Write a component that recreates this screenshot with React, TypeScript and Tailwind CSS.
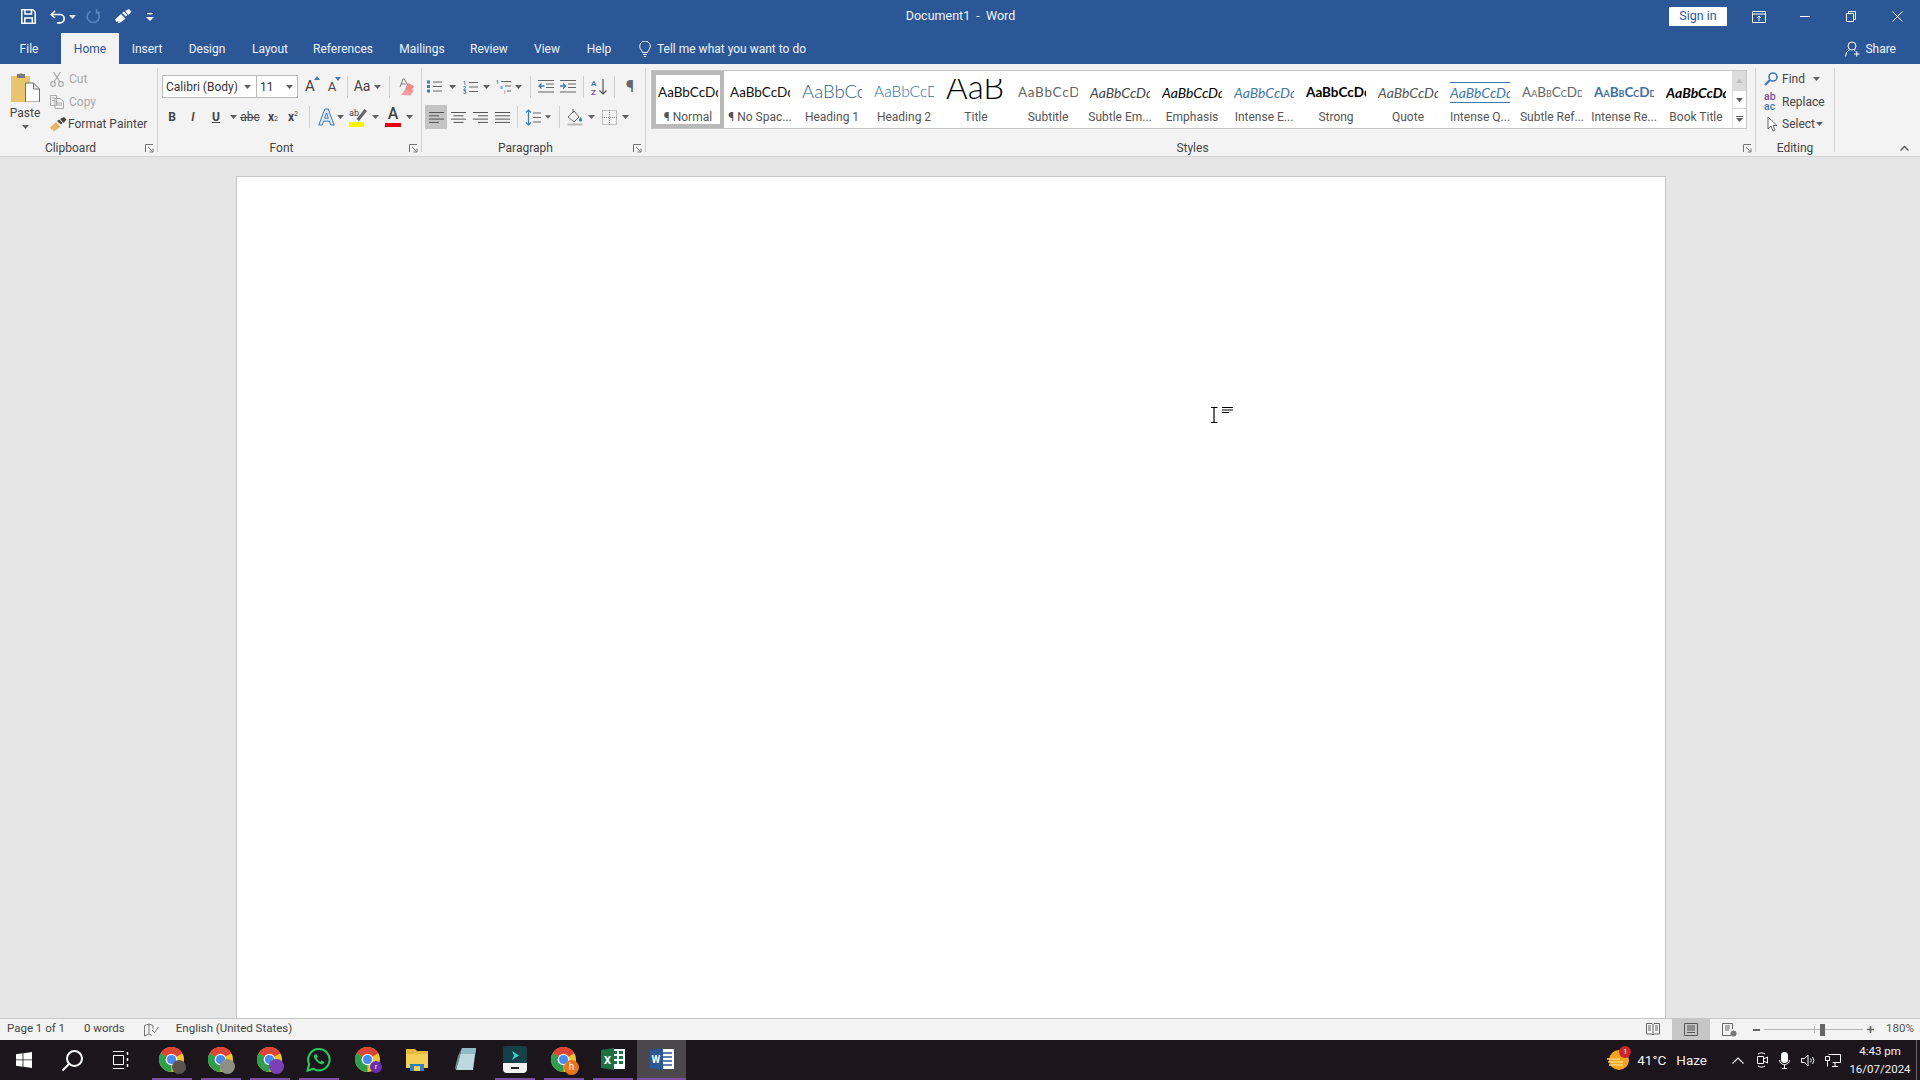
import type { ReactNode } from "react";

const TAB_LABELS = [
  ["Insert", "w-[56px]"],
  ["Design", "w-[64px]"],
  ["Layout", "w-[62px]"],
  ["References", "w-[84px]"],
  ["Mailings", "w-[74px]"],
  ["Review", "w-[60px]"],
  ["View", "w-[56px]"],
  ["Help", "w-[48px]"],
];

function Cell({ className, children }: { className: string; children?: ReactNode }) {
  return <div className={`flex shrink-0 items-center justify-center ${className}`}>{children}</div>;
}

function Caret({ color = "#5f5f5f" }: { color?: string }) {
  return (
    <svg width="7" height="4" viewBox="0 0 7 4">
      <path d="M0 0h7L3.5 4z" fill={color} />
    </svg>
  );
}

function Sep({ className = "h-[22px]" }: { className?: string }) {
  return <div className={`w-px bg-[#cfcfcf] ${className}`} />;
}

function Launcher() {
  return (
    <svg width="9" height="9" viewBox="0 0 9 9" fill="none" stroke="#777">
      <path d="M.5 8V.5H8" />
      <path d="M3 3l4.5 4.5M8 4.5V8H4.5" />
    </svg>
  );
}

function Brush({ handle, tip }: { handle: string; tip: string }) {
  return (
    <svg width="17" height="15" viewBox="0 0 17 15">
      <path d="M0 10.5 6 5l4.5 4.5C8 12 5 14 2.5 14.5L3.5 12 1.5 13z" fill={handle} />
      <path d="M7 4 11 7.5 12.5 6 9 2.5zM10 2l4-2 2.5 2.5-3 3.5z" fill={tip} />
    </svg>
  );
}

function Lines({ kind }: { kind: "left" | "center" | "right" | "justify" }) {
  const rows = [
    [0, 15],
    kind === "left" ? [0, 10] : kind === "center" ? [2.5, 12.5] : kind === "right" ? [5, 15] : [0, 15],
    [0, 15],
    kind === "left" ? [0, 10] : kind === "center" ? [2.5, 12.5] : kind === "right" ? [5, 15] : [0, 15],
  ];
  return (
    <svg width="15" height="13" viewBox="0 0 15 13" stroke="#555">
      {rows.map((r, i) => (
        <path key={i} d={`M${r[0]} ${1.5 + i * 3.3}H${r[1]}`} />
      ))}
    </svg>
  );
}

function Chrome({ badge }: { badge?: ReactNode }) {
  return (
    <div className="relative h-[25px] w-[25px]">
      <svg width="25" height="25" viewBox="0 0 24 24">
        <circle cx="12" cy="12" r="12" fill="#f0c42e" />
        <path d="M12 12 1.6 6A12 12 0 0 1 22.4 6z" fill="#db4437" />
        <path d="M12 12 1.6 6A12 12 0 0 0 12 24z" fill="#2f9e4f" />
        <circle cx="12" cy="12" r="5.6" fill="#fff" />
        <circle cx="12" cy="12" r="4.4" fill="#4a8bf0" />
      </svg>
      {badge}
    </div>
  );
}

function RibbonGroup({
  className,
  label,
  launcher = true,
  children,
}: {
  className: string;
  label: string;
  launcher?: boolean;
  children: ReactNode;
}) {
  return (
    <section className={`flex h-[84px] shrink-0 flex-col border-r border-[#cfcfcf] ${className}`}>
      <div className="h-[72px] shrink-0">{children}</div>
      <div className={`relative flex h-4 shrink-0 items-center justify-center text-[12px] leading-4 text-[#444] ${launcher ? "pr-[16px]" : ""}`}>
        {label}
        {launcher && (
          <span className="absolute right-[3px] top-[4px] flex">
            <Launcher />
          </span>
        )}
      </div>
    </section>
  );
}

const STYLES: { label: string; cls: string; text?: string }[] = [
  { label: "¶ Normal", cls: "text-[13.5px] text-[#111]" },
  { label: "¶ No Spac...", cls: "text-[13.5px] text-[#111]" },
  { label: "Heading 1", cls: "text-[18.5px] font-light text-[#2f5d8a]" },
  { label: "Heading 2", cls: "text-[15.5px] font-light text-[#2f6f9f]" },
  { label: "Title", cls: "text-[33px] font-light leading-none text-black mt-[-12px]", text: "AaB" },
  { label: "Subtitle", cls: "text-[13.5px] tracking-[0.7px] text-[#666]" },
  { label: "Subtle Em...", cls: "text-[14px] italic text-[#444]" },
  { label: "Emphasis", cls: "text-[14px] italic text-black" },
  { label: "Intense E...", cls: "text-[14px] italic text-[#3f78ad]" },
  { label: "Strong", cls: "text-[13.5px] font-bold text-black" },
  { label: "Quote", cls: "text-[14px] italic text-[#555]" },
  { label: "Intense Q...", cls: "text-[14px] italic text-[#3f78ad]" },
  { label: "Subtle Ref...", cls: "text-[13.5px] text-[#666] [font-variant-caps:small-caps]" },
  { label: "Intense Re...", cls: "text-[13.5px] font-bold text-[#3f6fa8] [font-variant-caps:small-caps]" },
  { label: "Book Title", cls: "text-[14px] font-bold italic text-black" },
];

function StyleItem({ label, cls, text, selected, rule }: { label: string; cls: string; text?: string; selected?: boolean; rule?: boolean }) {
  return (
    <div className={`flex h-[57px] w-[72px] shrink-0 flex-col items-center ${selected ? "border-[4px] border-[#b9b9b9] pt-[4px]" : "pt-[8px]"}`}>
      <div className="flex h-[26px] w-[60px] shrink-0 items-center font-['Lato',sans-serif]">
        <div className={`flex w-full items-center overflow-hidden whitespace-nowrap ${rule ? "h-[21px] border-y border-[#3f78ad]" : "h-full"}`}>
          <span className={cls}>{text ?? "AaBbCcDd"}</span>
        </div>
      </div>
      <div className="mt-[4px] whitespace-nowrap text-[12px] leading-[16px] text-[#555]">{label}</div>
    </div>
  );
}

function TaskItem({ children, bar = false, active = false }: { children: ReactNode; bar?: boolean; active?: boolean }) {
  return (
    <div className={`flex h-10 w-[49px] shrink-0 flex-col items-center ${active ? "bg-[#4b474b]" : ""}`}>
      <div className="flex flex-1 items-center justify-center">{children}</div>
      <div className={`h-[2px] ${active ? "w-full" : "w-[40px]"} ${bar ? "bg-[#7d4f9e]" : ""}`} />
    </div>
  );
}

function Badge({ className, children }: { className: string; children?: ReactNode }) {
  return (
    <span className={`absolute flex items-center justify-center rounded-full text-[8px] leading-none text-white ${className}`}>
      {children}
    </span>
  );
}

export default function App() {
  return (
    <div className="relative flex h-screen w-screen flex-col overflow-hidden bg-[#e6e6e6] font-['Roboto','Segoe_UI',sans-serif]">
      {/* Title bar */}
      <header className="flex h-[33px] shrink-0 items-center bg-[#2b5797] text-white">
        <div className="flex flex-1 items-center">
          <svg className="ml-[21px]" width="15" height="15" viewBox="0 0 15 15" fill="none" stroke="#fff" strokeWidth="1.5">
            <path d="M.8.8h11L14.2 3v11.2H.8z" />
            <path d="M4 1v4h6.5V1M3.8 14V9h7.5v5" />
          </svg>
          <svg className="ml-[14px]" width="16" height="14" viewBox="0 0 16 14" fill="none" stroke="#fff" strokeWidth="1.6">
            <path d="M1.5 4.5H10a4.2 4.2 0 0 1 0 8.4H7" />
            <path d="M5 1 1.3 4.5 5 8" />
          </svg>
          <span className="ml-[3px] flex"><Caret color="#dfe7f3" /></span>
          <svg className="ml-[10px]" width="16" height="15" viewBox="0 0 16 15" fill="none" stroke="#5a86c0" strokeWidth="1.6">
            <path d="M10 2.2a6 6 0 1 1-5.5 0" />
            <path d="M10.5 0v3.6H14" />
          </svg>
          <span className="ml-[13px] flex"><Brush handle="#fff" tip="#fff" /></span>
          <svg className="ml-[14px]" width="8" height="8" viewBox="0 0 8 8" fill="#fff">
            <path d="M1 0h6v1.2H1zM0 4h8L4 8z" />
          </svg>
        </div>
        <div className="pb-[1px] pl-[1px] text-[12.5px] text-[#f2f5fa]">Document1&nbsp; -&nbsp; Word</div>
        <div className="flex flex-1 items-center justify-end">
          <div className="mr-[9px] flex h-[19px] w-[58px] items-center justify-center bg-white text-[12.5px] text-[#2b5797]">Sign in</div>
          <Cell className="h-[33px] w-[46px]">
            <svg width="14" height="12" viewBox="0 0 14 12" fill="none" stroke="#fff">
              <path d="M.5.5h13v11H.5zM.5 3h13M7 10V5M5 7l2-2 2 2" />
            </svg>
          </Cell>
          <Cell className="h-[33px] w-[46px]">
            <div className="h-px w-[10px] bg-white" />
          </Cell>
          <Cell className="h-[33px] w-[46px]">
            <svg width="10" height="11" viewBox="0 0 10 11" fill="none" stroke="#fff">
              <path d="M.5 2.5h7v8h-7zM2.5 2.5v-2h7v8h-2" />
            </svg>
          </Cell>
          <Cell className="h-[33px] w-[46px]">
            <svg width="11" height="11" viewBox="0 0 11 11" stroke="#fff">
              <path d="M.5.5l10 10M10.5.5l-10 10" />
            </svg>
          </Cell>
        </div>
      </header>

      {/* Tabs */}
      <nav className="flex h-[31px] shrink-0 items-stretch bg-[#2b5797] text-[12px] text-[#f0f3f8]">
        <Cell className="w-[61px] pr-[3px]">File</Cell>
        <Cell className="w-[58px] bg-[#f3f3f3] text-[#2b5797]">Home</Cell>
        {TAB_LABELS.map(([name, w]) => (
          <Cell key={name} className={w}>
            {name}
          </Cell>
        ))}
        <div className="ml-[16px] flex items-center">
          <svg width="12" height="16" viewBox="0 0 12 16" fill="none" stroke="#fff">
            <path d="M3.5 11.5C3 9 .7 8.2.7 5.3a5.3 5.3 0 0 1 10.6 0c0 2.9-2.3 3.7-2.8 6.2zM4 13.5h4M4.8 15.5h2.4" />
          </svg>
          <span className="ml-[6px]">Tell me what you want to do</span>
        </div>
        <div className="ml-auto mr-[24px] flex items-center">
          <svg width="15" height="16" viewBox="0 0 15 16" fill="none" stroke="#fff">
            <circle cx="7" cy="5" r="4" />
            <path d="M.7 15.5c0-3.5 2-6 4-6.6M9 9c1 .4 1.6 1 2 1.6M9 13h5.5M11.8 10.3v5.4" />
          </svg>
          <span className="ml-[5px]">Share</span>
        </div>
      </nav>

      {/* Ribbon */}
      <div className="flex h-[93px] shrink-0 border-b border-[#d2d2d2] bg-[#f3f3f3] pt-[4px] text-[12px] text-[#444]">
        <RibbonGroup className="w-[158px]" label="Clipboard">
          <div className="flex">
            <div className="ml-[8px] flex w-[34px] flex-col items-center pt-[4px]">
              <svg width="29" height="30" viewBox="0 0 29 30">
                <path d="M0 4h19v26H0z" fill="#e9c46f" />
                <path d="M6 2h2.500a2 2 0 0 1 3 0H14v4H6z" fill="#7a7a7a" />
                <path d="M14.500 11h8l6 6v13h-14z" fill="#fff" stroke="#6f6f6f" />
                <path d="M22.500 11v6h6" fill="none" stroke="#6f6f6f" />
              </svg>
              <span className="mt-[3px] leading-4">Paste</span>
              <span className="mt-[4px] flex"><Caret /></span>
            </div>
            <div className="ml-[8px] flex flex-col">
              <div className="mt-[2px] flex h-[18px] items-center text-[#a9a9a9]">
                <svg width="14" height="15" viewBox="0 0 14 15" fill="none" stroke="#a8a8a8" strokeWidth="1.2">
                  <circle cx="3" cy="12" r="2.300" />
                  <circle cx="11" cy="12" r="2.300" />
                  <path d="M4 10 10.500 0M10 10 3.500 0" />
                </svg>
                <span className="ml-[5px]">Cut</span>
              </div>
              <div className="mt-[5px] flex h-[18px] items-center text-[#a9a9a9]">
                <svg width="14" height="14" viewBox="0 0 14 14" fill="none" stroke="#a8a8a8">
                  <path d="M.5.5h6v10h-6zM5 3.500h5l3.500 3v7H5zM2 3h3M2 5.500h3M7 8h5M7 10h5" />
                </svg>
                <span className="ml-[5px]">Copy</span>
              </div>
              <div className="mt-[4px] flex h-[18px] items-center">
                <Brush handle="#e3b765" tip="#444" />
                <span className="ml-[1px]">Format Painter</span>
              </div>
            </div>
          </div>
        </RibbonGroup>

        <RibbonGroup className="w-[264px]" label="Font">
          <div className="ml-[4px] mt-[7px] flex h-[23px] items-center">
            <div className="flex h-[23px] w-[95px] shrink-0 items-center justify-between border border-[#b9b9b9] bg-white pl-[3px] pr-[5px] text-[#333]">
              Calibri (Body)
              <Caret />
            </div>
            <div className="ml-[-1px] flex h-[23px] w-[42px] shrink-0 items-center justify-between border border-[#b9b9b9] bg-white pl-[3px] pr-[4px] text-[#333]">
              11
              <Caret />
            </div>
            <Cell className="ml-[1px] w-[22px]">
              <span className="relative text-[15px] text-[#444]">A<span className="absolute -right-[5px] top-[1px]"><svg width="6" height="4" viewBox="0 0 6 4"><path d="M0 4h6L3 0z" fill="#3f7cb0" /></svg></span></span>
            </Cell>
            <Cell className="w-[22px]">
              <span className="relative text-[13px] text-[#444]">A<span className="absolute -right-[5px] top-[0px]"><svg width="6" height="4" viewBox="0 0 6 4"><path d="M0 0h6L3 4z" fill="#3f7cb0" /></svg></span></span>
            </Cell>
            <Cell className="w-[8px]"><Sep /></Cell>
            <Cell className="w-[22px] text-[14px]">Aa</Cell>
            <Cell className="w-[8px]"><Caret /></Cell>
            <Cell className="w-[16px]"><Sep /></Cell>
            <Cell className="w-[18px]">
              <svg width="17" height="18" viewBox="0 0 17 18">
                <path d="M3 17 9 9l7 3.500-3.500 5z" fill="#f0a0a0" />
                <path d="M7 11 10 5l6 3-3 6z" fill="#ee8c8c" />
                <path d="M2 9 5 1h1.500l3 6M3.500 6h4" fill="none" stroke="#777" />
              </svg>
            </Cell>
          </div>
          <div className="ml-[4px] mt-[7px] flex h-[24px] items-center text-[#444]">
            <Cell className="w-[20px] text-[12px] font-bold">B</Cell>
            <Cell className="ml-[1px] w-[20px] text-[12px] italic font-semibold">I</Cell>
            <Cell className="ml-[1px] w-[24px] text-[12px] font-bold underline">U</Cell>
            <Cell className="w-[10px]"><Caret /></Cell>
            <Cell className="ml-[2px] w-[20px] text-[12px] line-through">abc</Cell>
            <Cell className="ml-[3px] w-[20px] text-[12px] font-bold">x<sub className="text-[7px] font-normal">2</sub></Cell>
            <Cell className="w-[20px] text-[12px] font-bold">x<sup className="text-[7px] font-normal">2</sup></Cell>
            <Cell className="w-[13px]"><Sep /></Cell>
            <Cell className="w-[20px]">
              <svg width="17" height="18" viewBox="0 0 17 18">
                <path d="M.8 17 6.800 1h3.400l6 16h-3.500l-1.300-3.800H5.600L4.300 17zM6.700 10.200h3.600L8.500 5z" fill="#dbe8f3" fillRule="evenodd" stroke="#3f7cb0" />
              </svg>
            </Cell>
            <Cell className="w-[8px]"><Caret /></Cell>
            <Cell className="ml-[4px] w-[22px]">
              <svg width="20" height="20" viewBox="0 0 20 20">
                <path d="M0 15h15v5H0z" fill="#f7f500" />
                <path d="M10 14l8-10-2.500-2-8 10z" fill="#666" />
                <text x="0" y="9" fontSize="9" fill="#444" fontFamily="Roboto">ab</text>
              </svg>
            </Cell>
            <Cell className="ml-[1px] w-[8px]"><Caret /></Cell>
            <Cell className="ml-[3px] w-[22px]">
              <div className="flex flex-col items-center">
                <span className="text-[16px] font-medium leading-[14px] text-[#444]">A</span>
                <div className="mt-[2px] h-[4px] w-[16px] bg-[#e3000f]" />
              </div>
            </Cell>
            <Cell className="ml-[1px] w-[8px]"><Caret /></Cell>
          </div>
        </RibbonGroup>

        <RibbonGroup className="w-[224px]" label="Paragraph">
          <div className="ml-[2px] mt-[7px] flex h-[23px] items-center">
            <Cell className="w-[21px]">
              <svg width="15" height="13" viewBox="0 0 15 13">
                <path d="M0 .5h3v3H0zM0 5h3v3H0zM0 9.500h3v3H0z" fill="#3f7cb0" />
                <path d="M6 2h9M6 6.500h9M6 11h9" stroke="#666" />
              </svg>
            </Cell>
            <Cell className="ml-[2px] w-[10px]"><Caret /></Cell>
            <Cell className="ml-[2px] w-[22px]">
              <svg width="15" height="14" viewBox="0 0 15 14">
                <text x="0" y="5" fontSize="5.500" fontWeight="700" fill="#3f7cb0" fontFamily="Roboto">1</text>
                <text x="0" y="9.500" fontSize="5.500" fontWeight="700" fill="#3f7cb0" fontFamily="Roboto">2</text>
                <text x="0" y="14" fontSize="5.500" fontWeight="700" fill="#3f7cb0" fontFamily="Roboto">3</text>
                <path d="M6 2.500h9M6 7h9M6 11.500h9" stroke="#666" />
              </svg>
            </Cell>
            <Cell className="w-[10px]"><Caret /></Cell>
            <Cell className="ml-[1px] w-[22px]">
              <svg width="15" height="15" viewBox="0 0 15 15">
                <text x="0" y="5" fontSize="5" fontWeight="700" fill="#3f7cb0" fontFamily="Roboto">1</text>
                <text x="4" y="9.500" fontSize="5" fill="#3f7cb0" fontFamily="Roboto">a</text>
                <text x="8" y="14.500" fontSize="5" fill="#555" fontFamily="Roboto">i</text>
                <path d="M5 2.500h10M9 7h6M11 12h4" stroke="#666" />
              </svg>
            </Cell>
            <Cell className="w-[8px]"><Caret /></Cell>
            <Cell className="w-[16px]"><Sep /></Cell>
            <Cell className="w-[16px]">
              <svg width="16" height="13" viewBox="0 0 16 13" fill="none">
                <path d="M0 .5h16M8 4h8M8 7.500h8M0 12h16" stroke="#666" />
                <path d="M6.500 6H1M3.500 3.500 1 6l2.500 2.500" stroke="#3f7cb0" strokeWidth="1.300" />
              </svg>
            </Cell>
            <Cell className="ml-[3px] w-[22px]">
              <svg width="16" height="13" viewBox="0 0 16 13" fill="none">
                <path d="M0 .5h16M8 4h8M8 7.500h8M0 12h16" stroke="#666" />
                <path d="M0 6h5.500M3 3.500 5.500 6 3 8.500" stroke="#3f7cb0" strokeWidth="1.300" />
              </svg>
            </Cell>
            <Cell className="w-[8px]"><Sep /></Cell>
            <Cell className="w-[24px]">
              <svg width="16" height="16" viewBox="0 0 16 16">
                <text x="0" y="7" fontSize="8" fontWeight="700" fill="#3f7cb0" fontFamily="Roboto">A</text>
                <text x="0" y="15.500" fontSize="8" fontWeight="700" fill="#7a4f9a" fontFamily="Roboto">Z</text>
                <path d="M12 0v15M8.500 11.500 12 15l3.500-3.500" fill="none" stroke="#555" strokeWidth="1.200" />
              </svg>
            </Cell>
            <Cell className="w-[6px]"><Sep /></Cell>
            <Cell className="w-[26px] text-[17px] font-medium text-[#666]">¶</Cell>
          </div>
          <div className="ml-[3px] mt-[7px] flex h-[24px] items-center">
            <Cell className="h-[24px] w-[22px] bg-[#c4c4c4]"><Lines kind="left" /></Cell>
            <Cell className="w-[22px]"><Lines kind="center" /></Cell>
            <Cell className="w-[22px]"><Lines kind="right" /></Cell>
            <Cell className="w-[22px]"><Lines kind="justify" /></Cell>
            <Cell className="w-[8px]"><Sep /></Cell>
            <Cell className="w-[24px]">
              <svg width="16" height="17" viewBox="0 0 16 17" fill="none">
                <path d="M3.500 1v15M1 3.500 3.500 1 6 3.500M1 13.500 3.500 16 6 13.500" stroke="#3f7cb0" strokeWidth="1.200" />
                <path d="M8 4h8M8 8.500h8M8 13h8" stroke="#666" />
              </svg>
            </Cell>
            <Cell className="w-[6px]"><Caret /></Cell>
            <Cell className="w-[16px]"><Sep /></Cell>
            <Cell className="w-[16px]">
              <svg width="16" height="17" viewBox="0 0 16 17" fill="none">
                <path d="M1 8 7 2l5 6-5 5z" stroke="#666" />
                <path d="M6 0v4" stroke="#666" />
                <path d="M13.500 8c1 1.500 1.500 2 1.500 3a1.500 1.500 0 0 1-3 0c0-1 .5-1.500 1.500-3z" fill="#3f7cb0" />
                <path d="M.5 15.500h15" stroke="#bbb" strokeWidth="2" />
              </svg>
            </Cell>
            <Cell className="w-[16px]"><Caret /></Cell>
            <Cell className="w-[20px]">
              <svg width="15" height="15" viewBox="0 0 15 15" fill="none" stroke="#8a8a8a" strokeDasharray="1 1">
                <path d="M.5.500h14v14H.5zM7.500 0v15M0 7.500h15" />
              </svg>
            </Cell>
            <Cell className="w-[12px]"><Caret /></Cell>
          </div>
        </RibbonGroup>

        <RibbonGroup className="w-[1110px]" label="Styles">
          <div className="ml-[5px] mt-[2px] flex h-[59px] w-[1096px] border border-[#c6c6c6] bg-white">
            <div className="flex w-[1080px]">
              {STYLES.map((s, i) => (
                <StyleItem key={s.label} {...s} selected={i === 0} rule={s.label === "Intense Q..."} />
              ))}
            </div>
            <div className="flex w-[14px] flex-col border-l border-[#dcdcdc]">
              <Cell className="h-[20px] bg-[#dcdcdc]">
                <svg width="7" height="4" viewBox="0 0 7 4"><path d="M0 4h7L3.500 0z" fill="#bdbdbd" /></svg>
              </Cell>
              <Cell className="h-[18px] border-b border-[#dcdcdc]"><Caret /></Cell>
              <Cell className="flex-1 flex-col gap-[1px]">
                <div className="h-px w-[7px] bg-[#5f5f5f]" />
                <Caret />
              </Cell>
            </div>
          </div>
        </RibbonGroup>

        <RibbonGroup className="w-[79px]" label="Editing" launcher={false}>
          <div className="ml-[8px] flex flex-col">
            <div className="mt-[2px] flex h-[18px] items-center">
              <svg width="14" height="14" viewBox="0 0 14 14" fill="none">
                <circle cx="9" cy="5" r="4" stroke="#3f7cb0" strokeWidth="1.600" />
                <path d="M6 8 1 13" stroke="#3f7cb0" strokeWidth="2.400" />
              </svg>
              <span className="ml-[4px]">Find</span>
              <span className="ml-[8px] flex"><Caret /></span>
            </div>
            <div className="mt-[5px] flex h-[18px] items-center">
              <div className="w-[17px] text-[10.5px] font-medium leading-[10px]">
                <div className="text-[#7a4f9a]">ab</div>
                <div className="text-[#3f7cb0]">ac</div>
              </div>
              <span className="ml-[1px]">Replace</span>
            </div>
            <div className="mt-[4px] flex h-[18px] items-center">
              <svg className="ml-[3px]" width="11" height="16" viewBox="0 0 11 16" fill="#fff" stroke="#666">
                <path d="M1 1v12l3-3 2 5 2-1-2-4.500h4z" />
              </svg>
              <span className="ml-[4px]">Select</span>
              <span className="ml-[1px] flex"><Caret /></span>
            </div>
          </div>
        </RibbonGroup>

        <div className="flex flex-1 items-end justify-end pb-[5px] pr-[11px]">
          <svg width="9" height="6" viewBox="0 0 9 6" fill="none" stroke="#555" strokeWidth="1.300">
            <path d="M.5 5.500 4.500 1.500l4 4" />
          </svg>
        </div>
      </div>

      {/* Document */}
      <main className="min-h-0 flex-1 pl-[236px] pt-[19px]">
        <div className="h-full w-[1430px] border-x border-t border-[#c6c6c6] bg-white" />
      </main>

      {/* Text cursor */}
      <svg className="absolute left-[1208px] top-[405px]" width="28" height="20" viewBox="0 0 28 20" fill="none" stroke="#000">
        <path d="M3 2.500h3.500L6 3v14M9.500 2.500H6M3 17.500h6.500" strokeWidth="1.200" />
        <path d="M14 2.500h11M14 5h11M14 7.500h7" />
      </svg>

      {/* Status bar */}
      <footer className="flex h-[22px] shrink-0 items-center border-t border-[#c6c6c6] bg-[#f3f3f3] text-[11.5px] text-[#444]">
        <span className="ml-[7px] pb-[2px]">Page 1 of 1</span>
        <span className="ml-[19px] pb-[2px]">0 words</span>
        <svg className="ml-[19px]" width="15" height="14" viewBox="0 0 15 14" fill="none" stroke="#777">
          <path d="M.5 2.500 5 1v10l-4.500 2zM5 1l4 1.500v3M5 11l3 1.500M8 7l2.500 2.500L14.500 4" />
        </svg>
        <span className="ml-[17px] pb-[2px]">English (United States)</span>
        <div className="ml-auto flex h-full items-center">
          <svg width="14" height="13" viewBox="0 0 14 13" fill="none" stroke="#666">
            <path d="M.5.500h5.500l1 1 1-1h5.500v10.500H8l-1 1-1-1H.5zM7 1.500v10M2 3h3M2 5h3M2 7h3M9 3h3M9 5h3M9 7h3" />
          </svg>
          <Cell className="ml-[12px] h-full w-[38px] bg-[#c6c6c6]">
            <svg width="14" height="13" viewBox="0 0 14 13" fill="none" stroke="#555">
              <path d="M.5.500h13v12H.5zM3 3h8M3 5h8M3 7h8M3 9.500h8" />
            </svg>
          </Cell>
          <svg className="ml-[12px]" width="15" height="14" viewBox="0 0 15 14" fill="none" stroke="#666">
            <path d="M9 12.500H.5V.500h10V6M3 3h5M3 5h5M3 7h4" />
            <circle cx="11.500" cy="10.500" r="3" fill="#7a7a7a" stroke="none" />
          </svg>
          <div className="ml-[16px] h-[2px] w-[7px] bg-[#666]" />
          <div className="relative ml-[4px] flex h-[12px] w-[99px] items-center">
            <div className="h-px w-full bg-[#b5b5b5]" />
            <div className="absolute left-[50px] h-[7px] w-px bg-[#b5b5b5]" />
            <div className="absolute left-[56px] h-[12px] w-[5px] bg-[#666]" />
          </div>
          <svg className="ml-[4px]" width="7" height="7" viewBox="0 0 7 7" stroke="#666" strokeWidth="1.600">
            <path d="M0 3.500h7M3.500 0v7" />
          </svg>
          <span className="ml-[12px] mr-[8px] w-[26px] pb-[2px] text-[#555]">180%</span>
        </div>
      </footer>

      {/* Taskbar */}
      <div className="flex h-10 shrink-0 items-center bg-[#1c161c] text-white">
        <Cell className="h-10 w-[48px]">
          <svg width="16" height="16" viewBox="0 0 16 16" fill="#fff">
            <path d="M0 2.300 6.600 1.300V7.500H0zM7.400 1.200 16 0V7.500H7.400zM0 8.300H6.600V14.700L0 13.700zM7.400 8.300H16V16L7.400 14.800z" />
          </svg>
        </Cell>
        <Cell className="h-10 w-[48px]">
          <svg width="23" height="23" viewBox="0 0 23 23" fill="none" stroke="#fff" strokeWidth="2">
            <circle cx="13.500" cy="9.500" r="7.500" />
            <path d="M8 15 1.500 21.500" />
          </svg>
        </Cell>
        <Cell className="h-10 w-[48px]">
          <svg width="17" height="18" viewBox="0 0 17 18" fill="none" stroke="#fff">
            <path d="M1 .5h11M1 17.500h11M1.500 4.500h10v9h-10z" />
            <path d="M15.500 1v3M15.500 7v3M15.500 13v3" strokeWidth="1.500" />
          </svg>
        </Cell>
        <div className="ml-[3px] flex">
          <TaskItem bar>
            <Chrome badge={<Badge className="-bottom-[2px] -right-[2px] h-[14px] w-[14px] bg-[#5b5350]" />} />
          </TaskItem>
          <TaskItem bar>
            <Chrome badge={<Badge className="-bottom-[2px] -right-[2px] h-[15px] w-[15px] bg-[#8d8f86]" />} />
          </TaskItem>
          <TaskItem bar>
            <Chrome badge={<Badge className="-bottom-[2px] -right-[2px] h-[15px] w-[15px] bg-[#7d3fb5]" />} />
          </TaskItem>
          <TaskItem bar>
            <svg width="25" height="25" viewBox="0 0 24 24" fill="none">
              <path d="M1.500 22.500 3 16.500A10.300 10.300 0 1 1 7 21z" stroke="#25c964" strokeWidth="2" />
              <path d="M8.500 7c-1.500 1.500-1 3.500 1 6s4.500 4 6.500 3.500c1-.3 1.500-1 1.500-2l-2.500-1.500-1.300 1.200c-1.200-.4-3-2.300-3.500-3.700l1.200-1.200L10 7z" fill="#25c964" />
            </svg>
          </TaskItem>
          <TaskItem>
            <Chrome badge={<Badge className="-bottom-[1px] -right-[2px] h-[12px] w-[12px] bg-[#6a2fb0]">r</Badge>} />
          </TaskItem>
          <TaskItem>
            <svg width="22" height="24" viewBox="0 0 22 24">
              <path d="M0 2h9l2 2h11v6H0z" fill="#e6b83c" />
              <path d="M0 7h22v14H0z" fill="#f4cf55" />
              <path d="M4 17h14v7H4z" fill="#2f7fc4" />
              <path d="M8 19h6v5H8z" fill="#f4cf55" />
            </svg>
          </TaskItem>
          <TaskItem>
            <svg width="22" height="24" viewBox="0 0 22 24">
              <path d="M7 1h14l-3 22H1z" fill="#bcd9de" />
              <path d="M7 1h14l-1 6H5.500z" fill="#8fbcc4" />
              <path d="M1 23 7 1l-4 8-3 12z" fill="#6f8f95" />
            </svg>
          </TaskItem>
          <TaskItem bar>
            <svg width="24" height="27" viewBox="0 0 24 27">
              <path d="M3 0h18a3 3 0 0 1 3 3v14H0V3a3 3 0 0 1 3-3z" fill="#153f49" />
              <path d="M0 17h24v6a4 4 0 0 1-4 4H4a4 4 0 0 1-4-4z" fill="#f2f2f2" />
              <path d="M9 5l7 4.500L9 14l2-4.500z" fill="#3fd0c9" />
              <path d="M8 21h8v2H8z" fill="#222" />
            </svg>
          </TaskItem>
          <TaskItem bar>
            <Chrome badge={<Badge className="-bottom-[3px] -right-[3px] h-[15px] w-[15px] bg-[#e8741e] text-[10px]">h</Badge>} />
          </TaskItem>
          <TaskItem bar>
            <svg width="24" height="24" viewBox="0 0 24 24">
              <path d="M10 2h14v20H10z" fill="#fff" />
              <path d="M12 4h4v3h-4zM18 4h4v3h-4zM12 9h4v3h-4zM18 9h4v3h-4zM12 14h4v3h-4zM18 14h4v3h-4z" fill="#1e7145" />
              <path d="M0 3 13 1v22L0 21z" fill="#1e7145" />
              <text x="3" y="16.500" fontSize="11" fontWeight="700" fill="#fff" fontFamily="Roboto">X</text>
            </svg>
          </TaskItem>
          <TaskItem bar active>
            <svg width="24" height="24" viewBox="0 0 24 24">
              <path d="M10 2h14v20H10z" fill="#fff" />
              <path d="M13 6h9M13 10h9M13 14h9M13 18h9" stroke="#2b5797" strokeWidth="1.500" />
              <path d="M0 3 13 1v22L0 21z" fill="#2b5797" />
              <text x="1.500" y="16" fontSize="10" fontWeight="700" fill="#fff" fontFamily="Roboto">W</text>
            </svg>
          </TaskItem>
        </div>

        <div className="ml-auto flex h-full items-center">
          <div className="relative mr-[8px] h-[22px] w-[22px]">
            <svg width="22" height="22" viewBox="0 0 22 22">
              <circle cx="12" cy="11" r="10" fill="#f3a421" />
              <path d="M0 10h13M1 13h15M2 16h14" stroke="#f9d477" strokeWidth="1.500" />
            </svg>
            <Badge className="-right-[2px] -top-[3px] h-[12px] w-[12px] bg-[#c9262a]">1</Badge>
          </div>
          <span className="text-[13.5px] text-[#f2f2f2]">41°C</span>
          <span className="ml-[10px] mr-[18px] text-[13.5px] text-[#f2f2f2]">Haze</span>
          <Cell className="w-[25px]">
            <svg width="12" height="7" viewBox="0 0 12 7" fill="none" stroke="#fff" strokeWidth="1.200">
              <path d="M.5 6.500l5.500-5.500 5.500 5.500" />
            </svg>
          </Cell>
          <Cell className="w-[23px]">
            <svg width="12" height="16" viewBox="0 0 12 16" fill="none" stroke="#fff">
              <path d="M1.500 4.500h6v7h-6zM7.500 7l4-2v6l-4-2M2 2c2-1.500 5-1.500 7 0M2 14c2 1.500 5 1.500 7 0" />
            </svg>
          </Cell>
          <Cell className="w-[23px]">
            <svg width="11" height="17" viewBox="0 0 11 17">
              <rect x="2" y="0" width="7" height="11" rx="3.500" fill="#fff" />
              <path d="M.5 8c0 6 10 6 10 0M5.500 13v3M3 16.500h5" fill="none" stroke="#fff" />
            </svg>
          </Cell>
          <Cell className="w-[25px]">
            <svg width="16" height="13" viewBox="0 0 16 13" fill="none" stroke="#fff">
              <path d="M.5 4.500h3l3.500-3.500v11l-3.500-3.500h-3zM9.500 4.500a3 3 0 0 1 0 4M11.500 3a5.500 5.500 0 0 1 0 7" />
            </svg>
          </Cell>
          <Cell className="w-[23px]">
            <svg width="16" height="13" viewBox="0 0 16 13" fill="none" stroke="#fff">
              <path d="M3.500.5h12v8h-8M7 12.500h6M10 8.500v4M.5 2.500h4v4h-4zM2.500 6.500v6" />
            </svg>
          </Cell>
          <div className="flex w-[72px] flex-col items-center text-[11.5px] leading-[18px] text-[#f2f2f2]">
            <span>4:43 pm</span>
            <span>16/07/2024</span>
          </div>
          <div className="h-full w-px bg-[#6b666b]" />
          <div className="w-[3px]" />
        </div>
      </div>
    </div>
  );
}
